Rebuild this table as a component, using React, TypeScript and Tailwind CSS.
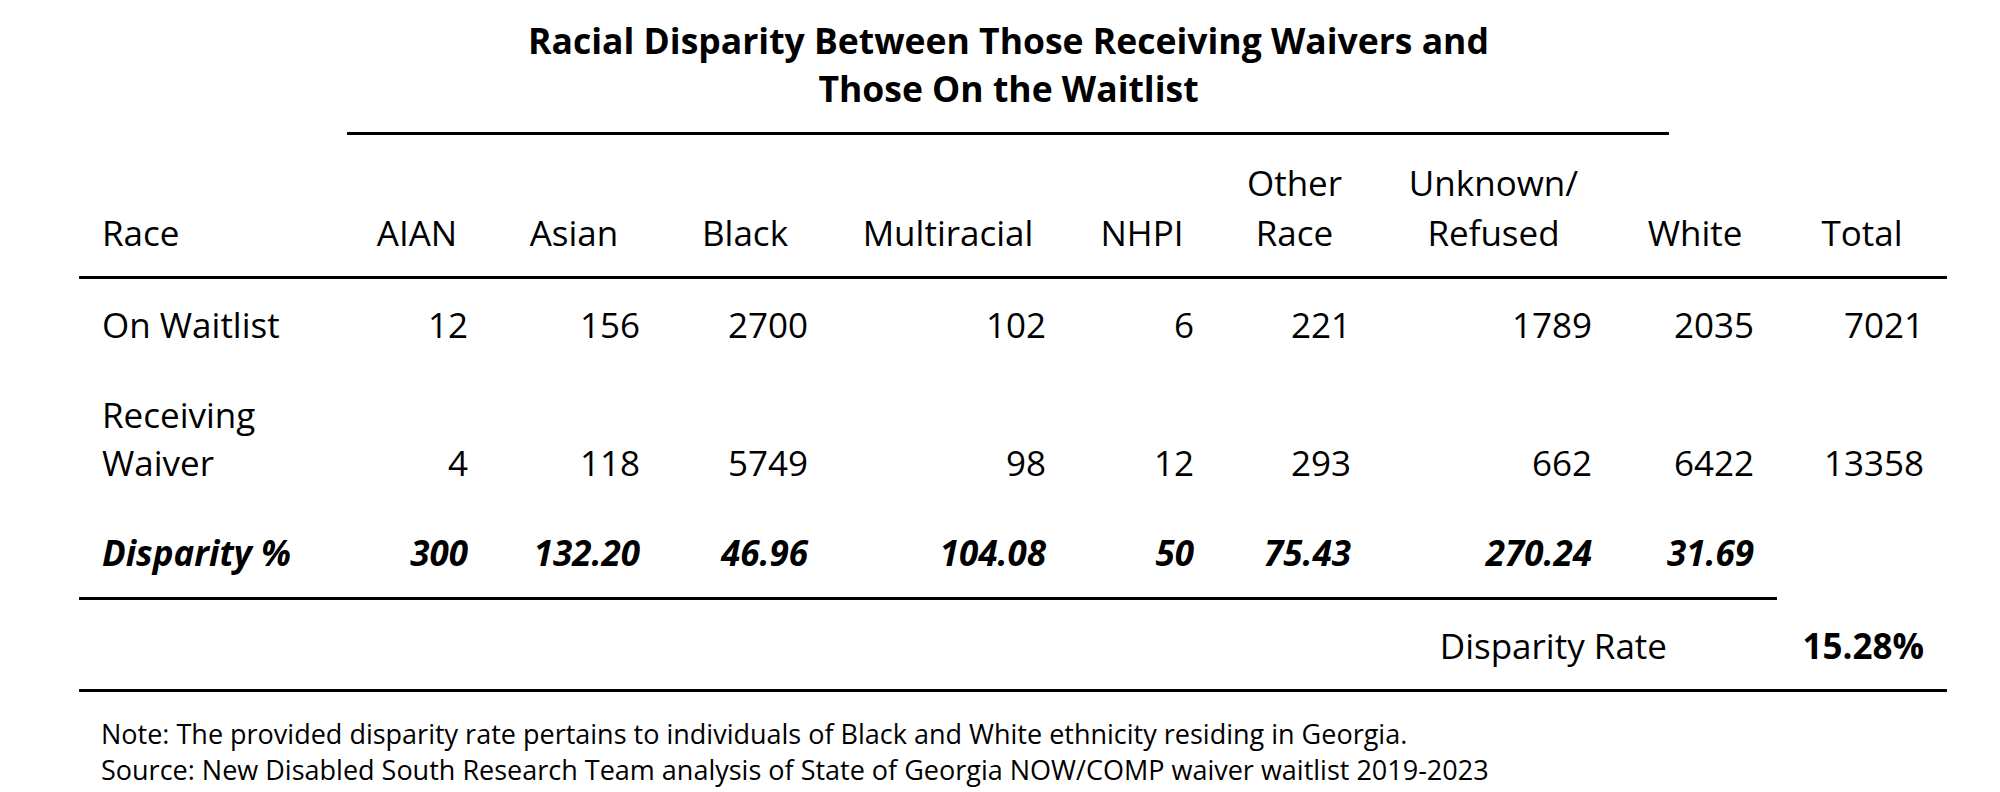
import React from "react";

const cols = "grid grid-cols-[270px_136px_178px_164px_242px_146px_159px_239px_164px_170px]";

// right padding per numeric column, so figures line up with the source
const pads = [
  "pr-[17px]",
  "pr-[23px]",
  "pr-[19px]",
  "pr-[23px]",
  "pr-[21px]",
  "pr-[23px]",
  "pr-[21px]",
  "pr-[23px]",
  "pr-[23px]",
];

const headers: string[][] = [
  ["AIAN"],
  ["Asian"],
  ["Black"],
  ["Multiracial"],
  ["NHPI"],
  ["Other", "Race"],
  ["Unknown/", "Refused"],
  ["White"],
  ["Total"],
];

const waitlist = ["12", "156", "2700", "102", "6", "221", "1789", "2035", "7021"];
const receiving = ["4", "118", "5749", "98", "12", "293", "662", "6422", "13358"];
const disparity = ["300", "132.20", "46.96", "104.08", "50", "75.43", "270.24", "31.69", ""];

function Rule({ className }: { className: string }) {
  return <div className={`h-[3px] bg-black ${className}`} />;
}

function Cells({ values }: { values: string[] }) {
  return (
    <>
      {values.map((v, i) => (
        <div key={i} className={`text-right ${pads[i]}`}>
          {v}
        </div>
      ))}
    </>
  );
}

export default function App() {
  return (
    <div className="w-[2000px] h-[792px] overflow-hidden bg-white text-black font-['Open_Sans',sans-serif]">
      {/* Title */}
      <div className="pt-[16px] pl-[17px] text-center text-[35.5px] font-bold leading-[48px]">
        Racial Disparity Between Those Receiving Waivers and
        <br />
        Those On the Waitlist
      </div>
      <Rule className="mt-[20px] ml-[347px] w-[1322px]" />

      {/* Header row */}
      <div className={`${cols} ml-[79px] h-[141px] pb-[18px] text-[35px] leading-[50px]`}>
        <div className="flex items-end pl-[23px]">Race</div>
        {headers.map((h) => (
          <div key={h.join()} className="flex flex-col items-center justify-end text-center">
            {h.map((line) => (
              <span key={line}>{line}</span>
            ))}
          </div>
        ))}
      </div>
      <Rule className="ml-[79px] w-[1868px]" />

      {/* Data rows */}
      <div className={`${cols} ml-[79px] pt-[22px] pb-[21px] text-[35px] leading-[48px]`}>
        <div className="pl-[23px]">On Waitlist</div>
        <Cells values={waitlist} />
      </div>
      <div className={`${cols} ml-[79px] py-[21px] text-[35px] leading-[48px] items-end`}>
        <div className="pl-[23px]">
          Receiving
          <br />
          Waiver
        </div>
        <Cells values={receiving} />
      </div>
      <div className={`${cols} ml-[79px] pt-[21px] pb-[20px] text-[35px] leading-[48px] font-bold italic`}>
        <div className="pl-[23px]">Disparity %</div>
        <Cells values={disparity} />
      </div>
      <Rule className="ml-[79px] w-[1698px]" />

      {/* Disparity rate */}
      <div className={`${cols} ml-[79px] pt-[22px] pb-[19px] text-[35px] leading-[48px]`}>
        <div className="col-span-9 text-right pr-[110px]">Disparity Rate</div>
        <div className="text-right pr-[23px] font-bold">15.28%</div>
      </div>
      <Rule className="ml-[79px] w-[1868px]" />

      {/* Notes */}
      <div className="ml-[101px] mt-[24px] text-[27px] leading-[36px]">
        <p>Note: The provided disparity rate pertains to individuals of Black and White ethnicity residing in Georgia.</p>
        <p>Source: New Disabled South Research Team analysis of State of Georgia NOW/COMP waiver waitlist 2019-2023</p>
      </div>
    </div>
  );
}
